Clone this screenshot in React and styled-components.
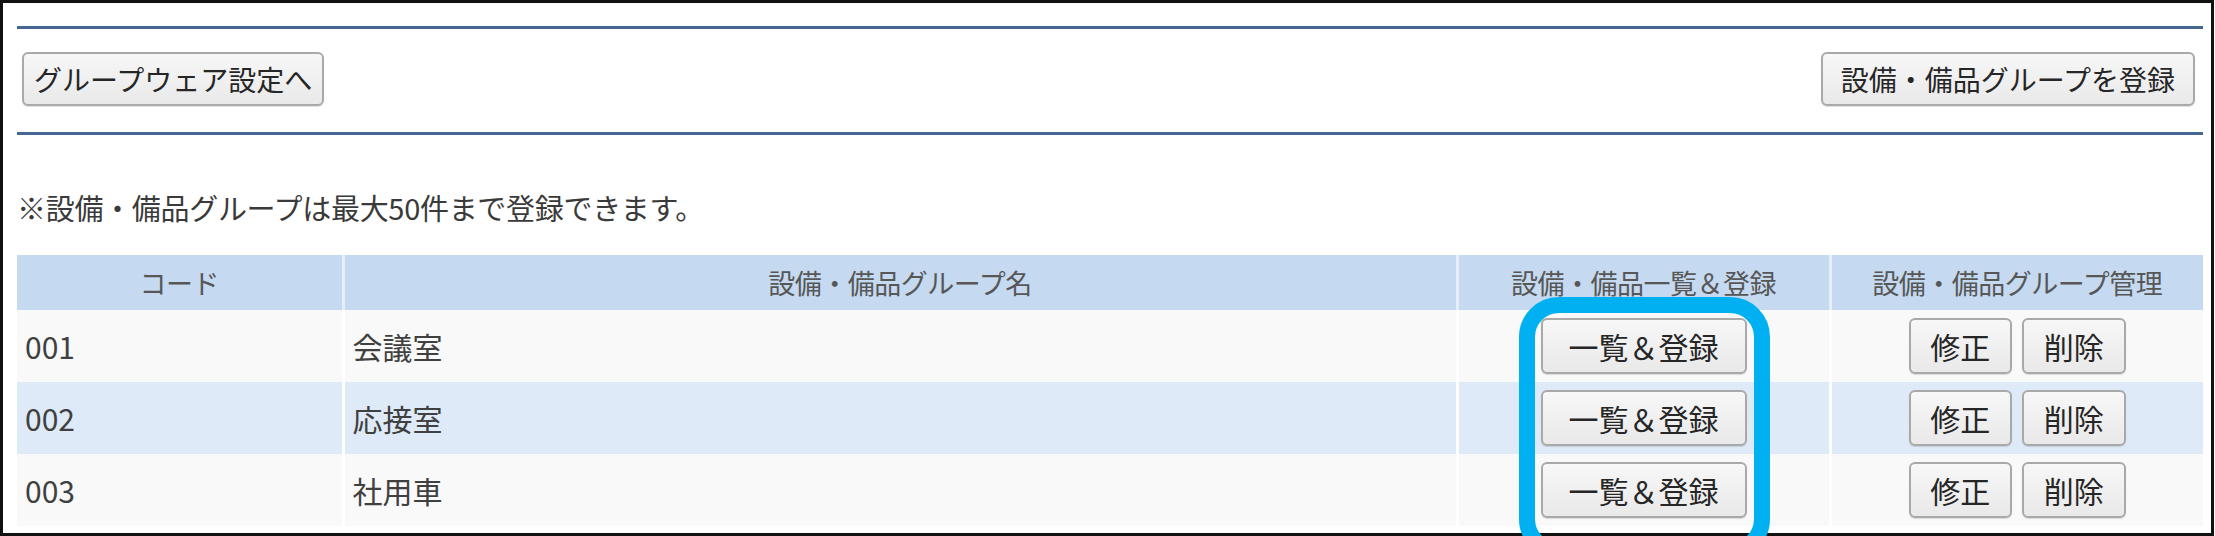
import React from 'react';
import styled, { createGlobalStyle } from 'styled-components';

const GlobalStyle = createGlobalStyle`
  html, body {
    margin: 0;
    padding: 0;
    background: #ffffff;
  }
  body {
    font-family: "Noto Sans CJK JP", "Noto Sans", sans-serif;
    color: #333;
  }
`;

const Page = styled.div`
  position: relative;
  width: 2215px;
  height: 536px;
  overflow: hidden;
`;

const Frame = styled.div`
  box-sizing: border-box;
  width: 2214px;
  height: 536px;
  border: 3px solid #111;
  padding: 0 8px 0 14px;
  display: flex;
  flex-direction: column;
`;

const Rule = styled.div`
  height: 3px;
  background: #456791;
  margin-top: ${p => p.$top}px;
`;

const Toolbar = styled.div`
  display: flex;
  justify-content: space-between;
  align-items: center;
  margin-top: 23px;
  padding: 0 8px 0 5px;
  height: 54px;
`;

const Button = styled.button`
  box-sizing: border-box;
  height: ${p => p.$h || 54}px;
  ${p => (p.$w ? `width: ${p.$w}px;` : '')}
  padding: 0 ${p => (p.$pad != null ? p.$pad : 18)}px;
  font-family: "Noto Sans CJK JP", "Noto Sans", sans-serif;
  font-size: ${p => p.$size || 28}px;
  line-height: 1;
  color: #262626;
  background: linear-gradient(#f7f7f7, #e9e9e9);
  border: 2px solid #a9a9a9;
  border-radius: 6px;
  box-shadow: 0 1px 1px rgba(0, 0, 0, 0.12);
  white-space: nowrap;
  cursor: pointer;
`;

const Note = styled.p`
  margin: 52px 0 0 0;
  height: 40px;
  line-height: 40px;
  font-size: 29px;
  color: #3a3a3a;
  letter-spacing: -0.3px;
`;

const Table = styled.table`
  margin-top: 28px;
  width: 2186px;
  table-layout: fixed;
  border-collapse: collapse;
`;

const HeadCell = styled.th`
  height: 55px;
  padding: 0;
  background: #c5d9f0;
  font-weight: normal;
  font-size: 27px;
  color: #575757;
  text-align: center;
  letter-spacing: -0.5px;
  border-left: ${p => (p.$first ? 'none' : '3px solid #e6eef8')};
`;

const Row = styled.tr`
  height: 72px;
  background: ${p => (p.$alt ? '#deeaf7' : '#f9f9f9')};
`;

const Cell = styled.td`
  padding: 0 0 0 ${p => (p.$center ? 0 : 8)}px;
  font-size: 30px;
  color: #404040;
  text-align: ${p => (p.$center ? 'center' : 'left')};
  vertical-align: middle;
  border-left: ${p => (p.$first ? 'none' : '3px solid #ffffff')};
`;

const ButtonPair = styled.div`
  display: flex;
  justify-content: center;
  gap: 10px;
`;

const Highlight = styled.div`
  position: absolute;
  left: 1519px;
  top: 297px;
  width: 251px;
  height: 262px;
  box-sizing: border-box;
  border: 16px solid #00b0f0;
  border-radius: 40px;
  pointer-events: none;
`;

const groups = [
  { code: '001', name: '会議室' },
  { code: '002', name: '応接室' },
  { code: '003', name: '社用車' },
];

const App = () => (
  <Page>
    <GlobalStyle />
    <Frame>
      <Rule $top={23} />
      <Toolbar>
        <Button $pad={10}>グループウェア設定へ</Button>
        <Button $pad={18}>設備・備品グループを登録</Button>
      </Toolbar>
      <Rule $top={26} />
      <Note>※設備・備品グループは最大50件まで登録できます。</Note>
      <Table>
        <colgroup>
          <col style={{ width: 326 }} />
          <col style={{ width: 1114 }} />
          <col style={{ width: 373 }} />
          <col style={{ width: 373 }} />
        </colgroup>
        <thead>
          <tr>
            <HeadCell $first>コード</HeadCell>
            <HeadCell>設備・備品グループ名</HeadCell>
            <HeadCell>設備・備品一覧＆登録</HeadCell>
            <HeadCell>設備・備品グループ管理</HeadCell>
          </tr>
        </thead>
        <tbody>
          {groups.map((g, i) => (
            <Row key={g.code} $alt={i % 2 === 1}>
              <Cell $first>{g.code}</Cell>
              <Cell>{g.name}</Cell>
              <Cell $center>
                <Button $h={56} $w={206} $pad={0} $size={30}>一覧＆登録</Button>
              </Cell>
              <Cell $center>
                <ButtonPair>
                  <Button $h={56} $w={103} $pad={0} $size={30}>修正</Button>
                  <Button $h={56} $w={104} $pad={0} $size={30}>削除</Button>
                </ButtonPair>
              </Cell>
            </Row>
          ))}
        </tbody>
      </Table>
    </Frame>
    <Highlight />
  </Page>
);

export default App;
